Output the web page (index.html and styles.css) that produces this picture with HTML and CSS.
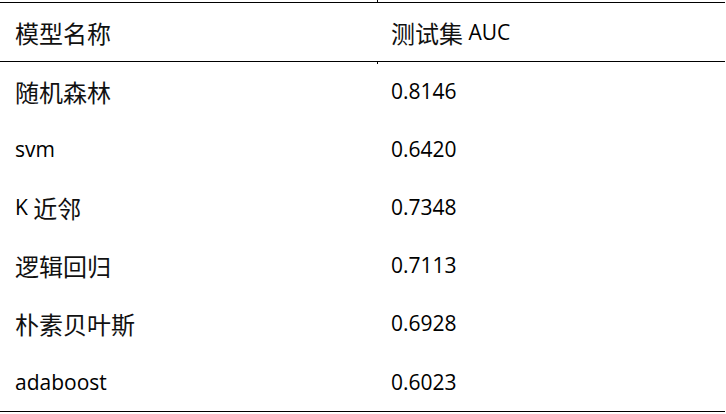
FILE: index.html
```html
<!DOCTYPE html>
<html lang="zh">
<head>
<meta charset="utf-8">
<title>模型 AUC</title>
<link rel="stylesheet" href="styles.css">
</head>
<body>
<div class="table">
  <div class="row head">
    <div class="cell c1"><span class="zh">模型名称</span></div>
    <div class="cell c2 tick-top tick-bottom"><span class="zh">测试集</span> AUC</div>
  </div>
  <div class="body">
    <div class="row">
      <div class="cell c1"><span class="zh">随机森林</span></div>
      <div class="cell c2">0.8146</div>
    </div>
    <div class="row">
      <div class="cell c1">svm</div>
      <div class="cell c2">0.6420</div>
    </div>
    <div class="row">
      <div class="cell c1">K <span class="zh">近邻</span></div>
      <div class="cell c2">0.7348</div>
    </div>
    <div class="row">
      <div class="cell c1"><span class="zh">逻辑回归</span></div>
      <div class="cell c2">0.7113</div>
    </div>
    <div class="row">
      <div class="cell c1"><span class="zh">朴素贝叶斯</span></div>
      <div class="cell c2">0.6928</div>
    </div>
    <div class="row last">
      <div class="cell c1">adaboost</div>
      <div class="cell c2 tick-bottom">0.6023</div>
    </div>
  </div>
</div>
</body>
</html>
```

FILE: styles.css
```css
html, body {
  margin: 0;
  padding: 0;
  background: #ffffff;
}

body {
  padding-top: 2px;
  font-family: "Open Sans", "Noto Sans CJK SC", sans-serif;
  font-size: 21px;
  color: #000000;
}

.table {
  width: 725px;
  border-top: 1px solid #000;
  border-bottom: 1px solid #000;
}

.head {
  border-bottom: 1px solid #000;
}

.row {
  display: grid;
  grid-template-columns: 377px 1fr;
  height: 58px;
}

.body .row {
  height: 58px;
}

.body .row.last {
  height: 59px;
}

.cell {
  display: flex;
  align-items: center;
  white-space: pre;
  position: relative;
}

.c1 {
  padding-left: 15px;
}

.c2 {
  padding-left: 14px;
}

.zh {
  font-family: "Noto Sans CJK SC", sans-serif;
  font-size: 24px;
  font-weight: 400;
  color: #111;
}

.tick-top::before,
.tick-bottom::after {
  content: "";
  position: absolute;
  left: 0;
  width: 1px;
  height: 2px;
  background: #000;
}

.tick-top::before {
  top: -3px;
}

.tick-bottom::after {
  bottom: -3px;
}
```
